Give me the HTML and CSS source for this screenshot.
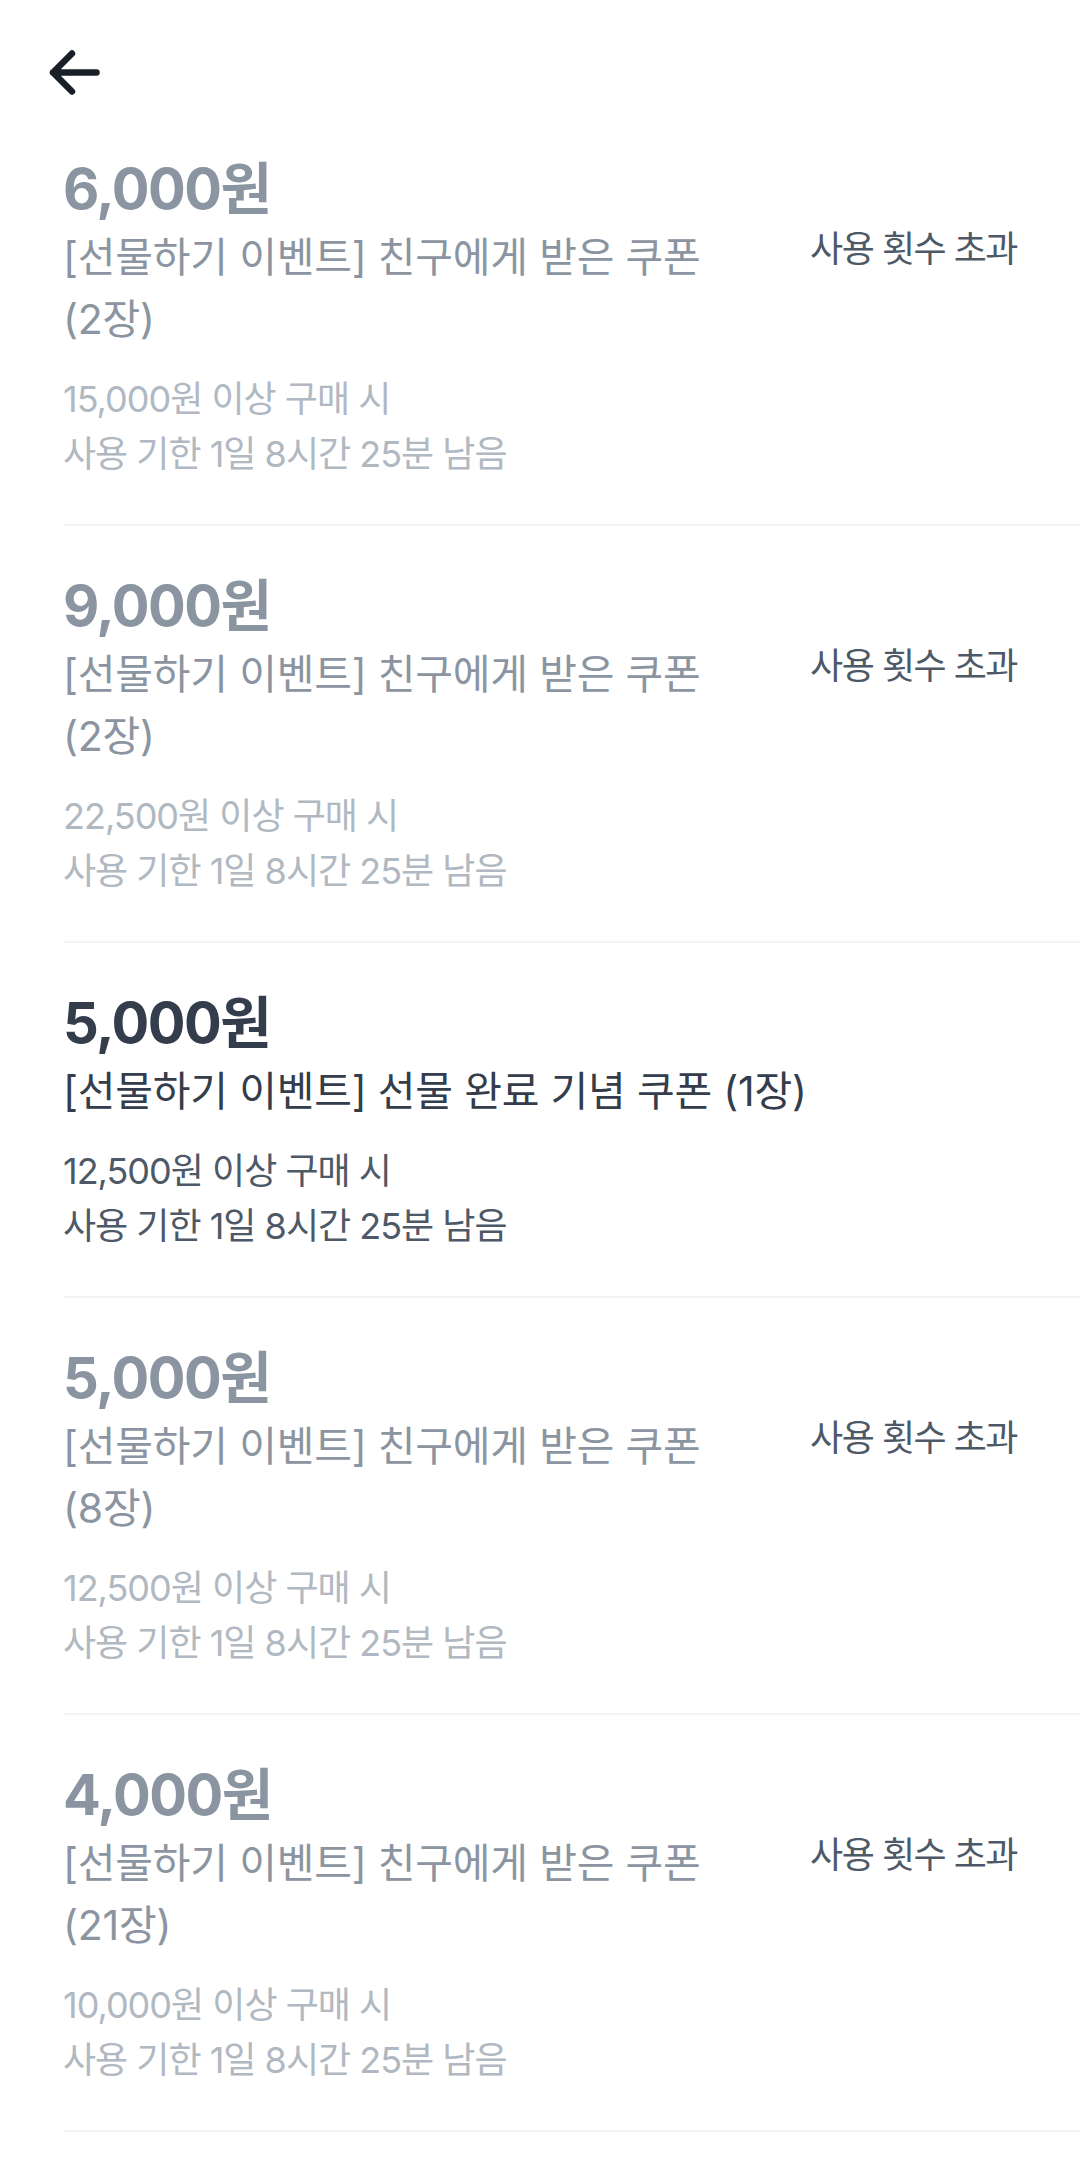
FILE: index.html
```html
<!DOCTYPE html>
<html lang="ko">

<head>
  <meta charset="UTF-8" />
  <meta name="viewport" content="width=device-width, initial-scale=1.0" />
  <title>쿠폰</title>
  <link rel="stylesheet" href="styles.css">
</head>

<body>
  <header class="topbar">
    <button class="back" aria-label="뒤로 가기">
      <svg width="60" height="58" viewBox="0 0 60 58">
        <path d="M9 28.5H52.5M28 9.5L9 28.5L28 47.5" fill="none" stroke="#191f28" stroke-width="6.5"
          stroke-linecap="round" stroke-linejoin="round" />
      </svg>
    </button>
  </header>

  <ul class="coupon-list">
    <li class="coupon coupon-off">
      <div class="coupon-head">
        <div class="coupon-info">
          <p class="coupon-price">6,000원</p>
          <p class="coupon-name">[선물하기 이벤트] 친구에게 받은 쿠폰 (2장)</p>
        </div>
        <span class="coupon-status">사용 횟수 초과</span>
      </div>
      <p class="coupon-cond">15,000원 이상 구매 시</p>
      <p class="coupon-cond">사용 기한 1일 8시간 25분 남음</p>
    </li>
    <li class="coupon coupon-off">
      <div class="coupon-head">
        <div class="coupon-info">
          <p class="coupon-price">9,000원</p>
          <p class="coupon-name">[선물하기 이벤트] 친구에게 받은 쿠폰 (2장)</p>
        </div>
        <span class="coupon-status">사용 횟수 초과</span>
      </div>
      <p class="coupon-cond">22,500원 이상 구매 시</p>
      <p class="coupon-cond">사용 기한 1일 8시간 25분 남음</p>
    </li>
    <li class="coupon">
      <div class="coupon-head">
        <div class="coupon-info">
          <p class="coupon-price">5,000원</p>
          <p class="coupon-name">[선물하기 이벤트] 선물 완료 기념 쿠폰 (1장)</p>
        </div>
      </div>
      <p class="coupon-cond">12,500원 이상 구매 시</p>
      <p class="coupon-cond">사용 기한 1일 8시간 25분 남음</p>
    </li>
    <li class="coupon coupon-off">
      <div class="coupon-head">
        <div class="coupon-info">
          <p class="coupon-price">5,000원</p>
          <p class="coupon-name">[선물하기 이벤트] 친구에게 받은 쿠폰 (8장)</p>
        </div>
        <span class="coupon-status">사용 횟수 초과</span>
      </div>
      <p class="coupon-cond">12,500원 이상 구매 시</p>
      <p class="coupon-cond">사용 기한 1일 8시간 25분 남음</p>
    </li>
    <li class="coupon coupon-off">
      <div class="coupon-head">
        <div class="coupon-info">
          <p class="coupon-price">4,000원</p>
          <p class="coupon-name">[선물하기 이벤트] 친구에게 받은 쿠폰 (21장)</p>
        </div>
        <span class="coupon-status">사용 횟수 초과</span>
      </div>
      <p class="coupon-cond">10,000원 이상 구매 시</p>
      <p class="coupon-cond">사용 기한 1일 8시간 25분 남음</p>
    </li>
  </ul>
</body>

</html>
```

FILE: styles.css
```css
/* Reset */
* {
    margin: 0;
    padding: 0;
    box-sizing: border-box;
}

body {
    background-color: #ffffff;
    font-family: Inter, "Noto Sans CJK KR", sans-serif;
    color: #333d4b;
}

/* Top bar with back button */
.topbar {
    padding: 44px 0 7px 44px;
}

.back {
    display: block;
    border: none;
    background: none;
    cursor: pointer;
}

.back svg {
    display: block;
}

/* Coupon list */
.coupon-list {
    list-style: none;
    margin-left: 63px;
}

.coupon {
    padding: 43px 63px 42px 0;
    border-bottom: 2px solid #f2f4f6;
}

.coupon-head {
    display: flex;
    align-items: center;
    gap: 40px;
    margin-bottom: 22px;
}

.coupon-info {
    flex: 1;
}

.coupon-price {
    font-size: 56px;
    font-weight: 700;
    line-height: 74px;
    letter-spacing: -1.5px;
    color: #333d4b;
}

.coupon-name {
    font-size: 41px;
    line-height: 62px;
    letter-spacing: -0.2px;
    word-break: keep-all;
    color: #333d4b;
}

.coupon-cond {
    font-size: 36px;
    line-height: 55px;
    letter-spacing: -1px;
    color: #4e5968;
}

.coupon-status {
    margin-bottom: 10px;
    font-size: 36px;
    letter-spacing: -1.5px;
    color: #4e5968;
    white-space: nowrap;
}

/* Used up coupons */
.coupon-off .coupon-price,
.coupon-off .coupon-name {
    color: #8b95a1;
}

.coupon-off .coupon-cond {
    color: #b0b8c1;
}
```
